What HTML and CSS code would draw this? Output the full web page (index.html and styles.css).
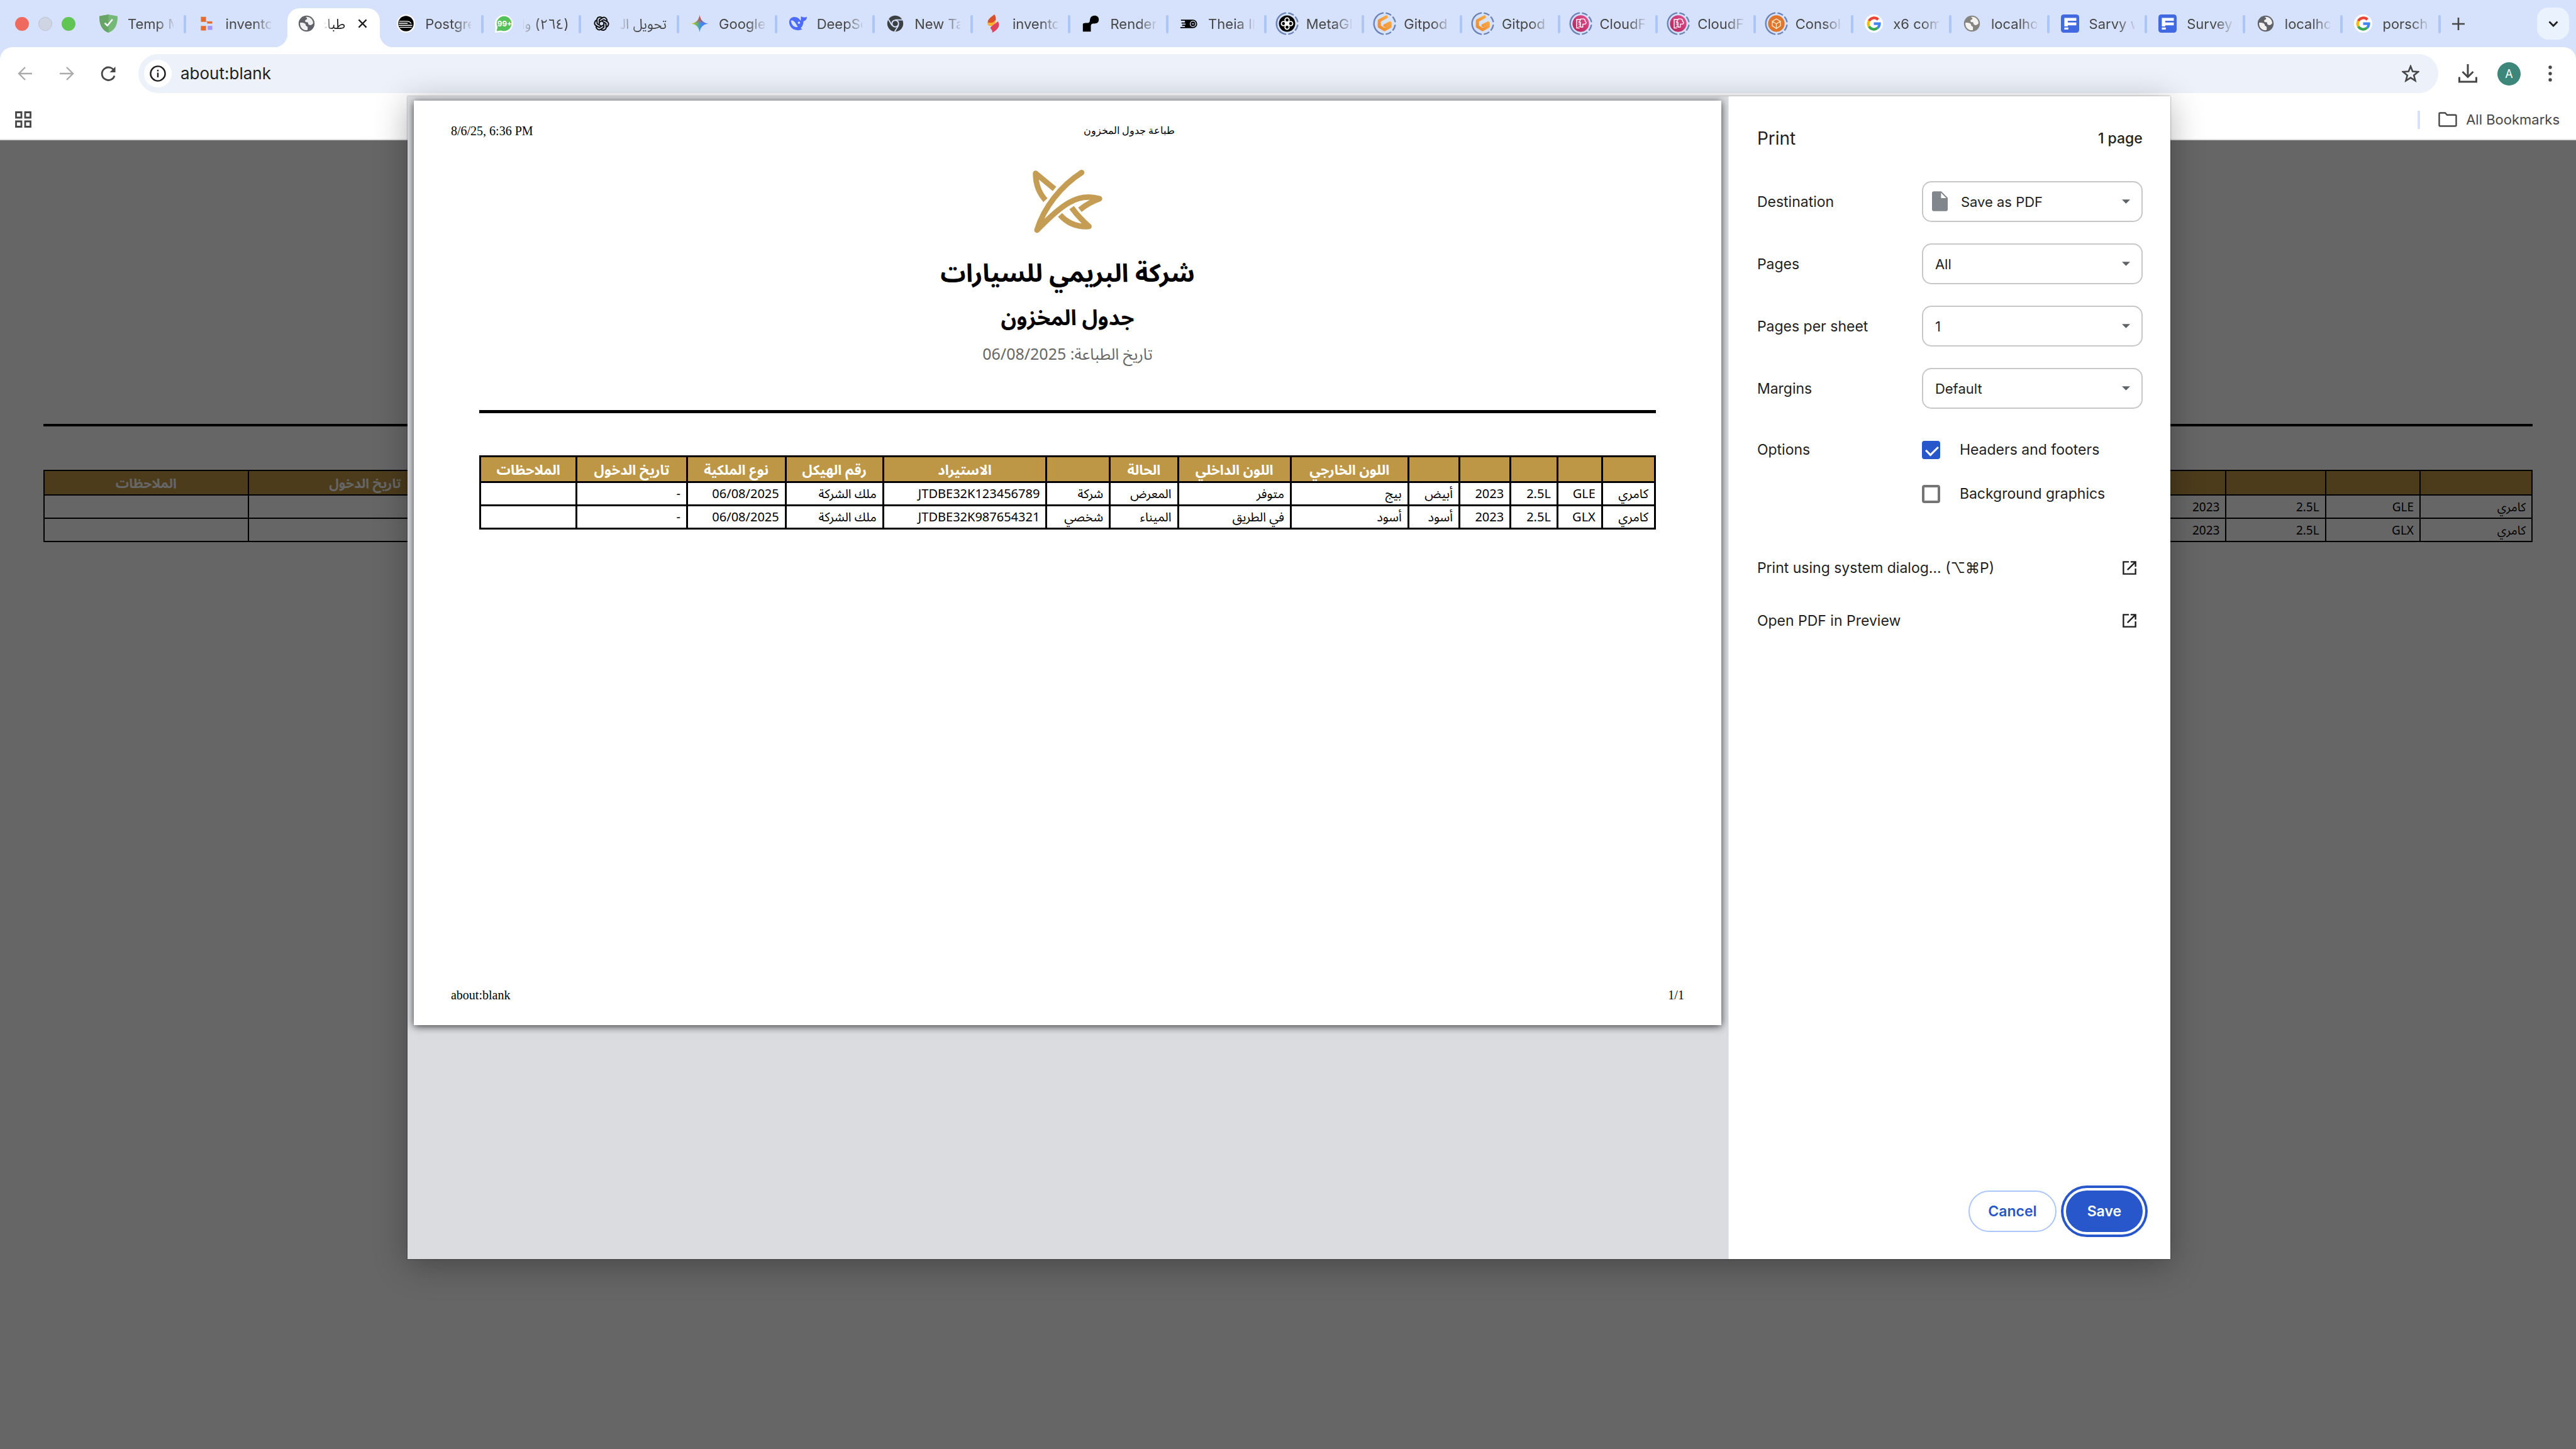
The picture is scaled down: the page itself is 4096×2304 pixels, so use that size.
FILE: index.html
```html
<!DOCTYPE html>
<html lang="en">
<head>
<meta charset="utf-8">
<title>about:blank</title>
<link rel="stylesheet" href="styles.css">
</head>
<body>
<svg class="symbols" aria-hidden="true">
  <symbol id="i-globe" viewBox="0 0 32 32"><circle cx="16" cy="16" r="14" fill="currentColor"/><path d="M4.500 14.500 C9 14 14.500 15 14.500 18.500 C14.500 21 18 20 18 23.500 L17.500 27.500 C10 28.500 4 23 4.500 14.500Z M14 4.500 C21 3 27.500 8.500 27.600 15.500 C25 19 22.500 19.500 20 18 C17.500 16.500 20 13.500 16.500 13.500 C12.500 13.500 12.500 9.500 15.500 9 C18 8.500 17 5.500 14 4.500Z" fill="#fff" fill-opacity=".9"/></symbol>
  <symbol id="i-shield" viewBox="0 0 32 32"><path d="M16 0 C21 1 26 2 32 3 C32 18 28 27 16 32 C4 27 0 18 0 3 C6 2 11 1 16 0Z" fill="#76b877"/><path d="M16 0 V32 C4 27 0 18 0 3 C6 2 11 1 16 0Z" fill="#66a567"/><path d="M9.500 15 L14 19.500 L23 8.500" fill="none" stroke="#fff" stroke-width="2.600"/></symbol>
  <symbol id="i-blocks" viewBox="0 0 32 32"><path d="M6 4 h9 v8 h11 v4 h-9 v-3 h-11Z M6 20 h9 v8 h-9Z" fill="#e56b2e"/><rect x="18" y="20" width="8" height="7" fill="#a594fb"/></symbol>
  <symbol id="i-train" viewBox="0 0 32 32"><circle cx="16" cy="16" r="16" fill="#fff"/><circle cx="16" cy="16" r="13.500" fill="#000"/><path d="M4 12 H17 Q23 12 25 16 M3.500 15.500 H19 M3.500 19 H27 M5 22.500 H26" stroke="#fff" stroke-width="1.600" fill="none"/></symbol>
  <symbol id="i-chat" viewBox="0 0 32 32"><path d="M0 32 L1 22 A16 15.500 0 1 1 11 31Z" fill="#fff"/><path d="M3 29 L4.500 22 A13 13 0 1 1 11 28Z" fill="#55c15a"/><text x="17" y="21" text-anchor="middle" class="badge-text">99+</text></symbol>
  <symbol id="i-gpt" viewBox="0 0 32 32"><g fill="none" stroke="#111" stroke-width="2.200"><path id="petal" d="M12 17.500 V9.500 L17 6 C22 3 27 8 25 13"/><use href="#petal" transform="rotate(60 16 16)"/><use href="#petal" transform="rotate(120 16 16)"/><use href="#petal" transform="rotate(180 16 16)"/><use href="#petal" transform="rotate(240 16 16)"/><use href="#petal" transform="rotate(300 16 16)"/></g></symbol>
  <symbol id="i-gemini" viewBox="0 0 32 32"><path d="M16 1 C17.500 10 22 14.500 31 16 C22 17.500 17.500 22 16 31 C14.500 22 10 17.500 1 16 C10 14.500 14.500 10 16 1Z" fill="url(#gem)"/><path d="M16 1 C17.500 10 22 14.500 31 16 H16Z" fill="url(#gem-top)"/><path d="M16 1 C14.500 10 10 14.500 1 16 H16Z" fill="url(#gem-top)"/></symbol>
  <symbol id="i-whale" viewBox="0 0 32 32"><path d="M1 12 C2 6 8 3 14 5 C17 6 19 8 21 11 C22 8 21 5 22 3 C24 5 27 6 32 4 C32 9 29 11 26 12 C26 17 24 21 21 24 L24 26 C14 31 0 25 1 12Z" fill="#4d6bfe"/><path d="M4 11 C8 9 12 14 16 22 C9 23 5 18 4 11Z" fill="#d5e2fb"/><circle cx="18" cy="14.500" r="2" fill="#d5e2fb"/></symbol>
  <symbol id="i-chrome" viewBox="0 0 32 32"><circle cx="16" cy="16" r="14" fill="#3c4043"/><circle cx="16" cy="16" r="5.800" fill="none" stroke="#d5e2fb" stroke-width="2.200"/><path d="M16 9.500 H29 M10.200 19 L4 8.500 M21.800 19 L15 30" stroke="#d5e2fb" stroke-width="2"/></symbol>
  <symbol id="i-flame" viewBox="0 0 32 32"><path d="M18 0 C9 6 4 11 7 17 C8 20 12 19 15 17 C21 13 22 6 18 0Z" fill="#d9512c"/><path d="M19 10 C22 15 18 18 13 20 C8 21 5 18 6 14 C12 15 17 15 19 10Z" fill="#fbb034"/><path d="M14 32 C24 27 29 19 24 12 C20 16 12 20 11 23 C10 26 15 26 14 32Z" fill="#e0435e"/></symbol>
  <symbol id="i-render" viewBox="0 0 32 32"><path d="M2 30 V17 C2 15 7 15 10 15 C16 15 13 9 16 5 C20 0 30 1 30 9 C30 15 25 16 21 16 C17 16 16 18 16 21 V30Z" fill="#000"/></symbol>
  <symbol id="i-theia" viewBox="0 0 32 32"><path d="M2 9 H23 A7.500 7.500 0 0 1 23 24 H1 V22 H9 V20 H4 V18 H10 V16 H3 V14 H9 V11 H2Z" fill="#000"/><circle cx="23" cy="16.500" r="4.800" fill="none" stroke="#d5e2fb" stroke-width="1.500"/><path d="M21 16.500 h4" stroke="#d5e2fb" stroke-width="1.500"/></symbol>
  <symbol id="i-ring" viewBox="0 0 40 40"><g fill="none" stroke="#6c83b5" stroke-width="2.600" stroke-linecap="round"><path d="M17.500 1.800 A18.400 18.400 0 0 0 17.500 38.200"/><path d="M23 2 A18.400 18.400 0 0 1 30.500 5 M34.500 9 A18.400 18.400 0 0 1 38.200 16.500 M38.200 23 A18.400 18.400 0 0 1 34.500 31 M30.500 35 A18.400 18.400 0 0 1 23 38"/></g></symbol>
  <symbol id="i-meta" viewBox="0 0 40 40"><use href="#i-ring"/><circle cx="20" cy="20" r="14" fill="#000"/><g fill="none" stroke="#fff" stroke-width="2"><circle cx="20" cy="13.800" r="3.600"/><circle cx="20" cy="26.200" r="3.600"/><circle cx="13.800" cy="20" r="3.600"/><circle cx="26.200" cy="20" r="3.600"/><path d="M17 17 L23 23 M17 23 L23 17"/></g></symbol>
  <symbol id="i-gitpod" viewBox="0 0 40 40"><use href="#i-ring"/><path d="M23 8.500 L11 15 V25 L20 30.500 L29.500 25 V19 L20.500 23.500" fill="none" stroke="url(#git)" stroke-width="5.400" stroke-linejoin="round" stroke-linecap="round"/></symbol>
  <symbol id="i-cloud" viewBox="0 0 40 40"><use href="#i-ring"/><circle cx="20" cy="20" r="14.200" fill="url(#pink)"/><g fill="none" stroke="#fff" stroke-width="1.500"><path d="M18 27.500 H13 V13 H20 M16 17 h2 M16 21 h4 M16 24.500 h3"/><path d="M20 12 h5 q3 1 2.500 4 q3.500 2 0 5 h-4 v5 h-4 v-8 h-2Z"/></g></symbol>
  <symbol id="i-console" viewBox="0 0 40 40"><use href="#i-ring"/><circle cx="20" cy="20" r="14.200" fill="#e0762b"/><path d="M20 12 L27 16 V24 L20 28.500 L13 24 V16Z M13 16 L20 20.500 L27 16 M20 20.500 V28" fill="none" stroke="#fbe3c8" stroke-width="1.500"/></symbol>
  <symbol id="i-google" viewBox="0 0 32 32"><circle cx="16" cy="16" r="16" fill="#fff"/><g fill="none" stroke-width="4.600"><path d="M23.500 9 A10 10 0 0 0 7.500 11.500" stroke="#ea4335"/><path d="M7.500 11.500 A10 10 0 0 0 7.500 21" stroke="#fbbc05"/><path d="M7.500 21 A10 10 0 0 0 22.800 23.500" stroke="#34a853"/><path d="M16 16.200 H26 A10 10 0 0 1 22.800 23.500" stroke="#4285f4"/></g></symbol>
  <symbol id="i-form" viewBox="0 0 32 32"><rect width="32" height="32" rx="5" fill="#4169e1"/><path d="M6 6 H27 V11 H12 V14 H27 V19 H12 V21 H6Z M6 23 h7 v3.500 h-7Z" fill="#fff"/></symbol>
  <symbol id="i-open" viewBox="0 0 24 24"><path d="M11 1.500 H1.500 V22.500 H22.500 V13 M14 1.500 H22.500 V10 M22 2 L8.500 15.500" fill="none" stroke="#1f1f1f" stroke-width="2.600"/></symbol>
  <symbol id="i-down" viewBox="0 0 14 7"><path d="M0 0 H14 L7 7Z" fill="#5f6368"/></symbol>
  <defs>
    <linearGradient id="gem" x1="0" y1=".5" x2="1" y2=".5"><stop offset="0" stop-color="#f9c20a"/><stop offset=".35" stop-color="#5bb974"/><stop offset=".6" stop-color="#4285f4"/><stop offset="1" stop-color="#4285f4"/></linearGradient>
    <linearGradient id="gem-top" x1="0" y1="0" x2="0" y2="1"><stop offset="0" stop-color="#ea4335"/><stop offset=".45" stop-color="#ea4335" stop-opacity=".8"/><stop offset="1" stop-color="#ea4335" stop-opacity="0"/></linearGradient>
    <linearGradient id="git" x1="1" y1="0" x2="0" y2="1"><stop offset="0" stop-color="#f9ae4a"/><stop offset="1" stop-color="#f08a2c"/></linearGradient>
    <linearGradient id="pink" x1="0" y1="1" x2="1" y2="0"><stop offset="0" stop-color="#b0235c"/><stop offset="1" stop-color="#e3528e"/></linearGradient>
  </defs>
</svg>

<header class="browser">
  <div class="tab-strip">
    <div class="lights"><span class="light red"></span><span class="light idle"></span><span class="light green"></span></div>
    <nav class="tabs" aria-label="Open tabs">
      <button class="tab"><svg class="fav"><use href="#i-shield"/></svg><span class="tab-title">Temp Mail</span></button>
      <button class="tab quiet"><svg class="fav"><use href="#i-blocks"/></svg><span class="tab-title">inventory</span></button>
      <button class="tab active"><svg class="fav grey"><use href="#i-globe"/></svg><span class="tab-title rtl" dir="rtl">طباعة</span><svg class="close" viewBox="0 0 16 16"><path d="M1.500 1.500 L14.500 14.500 M14.500 1.500 L1.500 14.500" stroke="#1f1f1f" stroke-width="2.400"/></svg></button>
      <button class="tab"><svg class="fav"><use href="#i-train"/></svg><span class="tab-title">Postgres</span></button>
      <button class="tab"><svg class="fav"><use href="#i-chat"/></svg><span class="tab-title rtl" dir="rtl">(٢٦٤) واتساب</span></button>
      <button class="tab"><svg class="fav"><use href="#i-gpt"/></svg><span class="tab-title rtl" dir="rtl">تحويل الملف</span></button>
      <button class="tab"><svg class="fav"><use href="#i-gemini"/></svg><span class="tab-title">Google G</span></button>
      <button class="tab"><svg class="fav"><use href="#i-whale"/></svg><span class="tab-title">DeepSeek</span></button>
      <button class="tab"><svg class="fav"><use href="#i-chrome"/></svg><span class="tab-title">New Tab</span></button>
      <button class="tab"><svg class="fav"><use href="#i-flame"/></svg><span class="tab-title">inventory</span></button>
      <button class="tab"><svg class="fav"><use href="#i-render"/></svg><span class="tab-title">Render</span></button>
      <button class="tab"><svg class="fav"><use href="#i-theia"/></svg><span class="tab-title">Theia IDE</span></button>
      <button class="tab"><svg class="fav ring"><use href="#i-meta"/></svg><span class="tab-title">MetaGPT</span></button>
      <button class="tab"><svg class="fav ring"><use href="#i-gitpod"/></svg><span class="tab-title">Gitpod</span></button>
      <button class="tab"><svg class="fav ring"><use href="#i-gitpod"/></svg><span class="tab-title">Gitpod</span></button>
      <button class="tab"><svg class="fav ring"><use href="#i-cloud"/></svg><span class="tab-title">CloudFo</span></button>
      <button class="tab"><svg class="fav ring"><use href="#i-cloud"/></svg><span class="tab-title">CloudFo</span></button>
      <button class="tab"><svg class="fav ring"><use href="#i-console"/></svg><span class="tab-title">Console</span></button>
      <button class="tab"><svg class="fav"><use href="#i-google"/></svg><span class="tab-title">x6 com</span></button>
      <button class="tab"><svg class="fav warm"><use href="#i-globe"/></svg><span class="tab-title">localhost</span></button>
      <button class="tab"><svg class="fav"><use href="#i-form"/></svg><span class="tab-title">Sarvy w</span></button>
      <button class="tab"><svg class="fav"><use href="#i-form"/></svg><span class="tab-title">Survey</span></button>
      <button class="tab"><svg class="fav grey"><use href="#i-globe"/></svg><span class="tab-title">localhost</span></button>
      <button class="tab"><svg class="fav"><use href="#i-google"/></svg><span class="tab-title">porsche</span></button>
    </nav>
    <button class="new-tab" aria-label="New tab"><svg viewBox="0 0 20 20"><path d="M10 0 V20 M0 10 H20" stroke="#474747" stroke-width="2.600"/></svg></button>
    <button class="tab-search" aria-label="Search tabs"><svg viewBox="0 0 16 10"><path d="M1.500 1.500 L8 8 L14.500 1.500" fill="none" stroke="#1f1f1f" stroke-width="2.800"/></svg></button>
  </div>
  <div class="chrome">
    <div class="toolbar">
      <div class="nav-buttons">
        <button aria-label="Back"><svg viewBox="0 0 24 24"><path d="M23 12 H2 M12 2 L2 12 L12 22" fill="none" stroke="#aaa" stroke-width="2.400"/></svg></button>
        <button aria-label="Forward"><svg viewBox="0 0 24 24"><path d="M1 12 H22 M12 2 L22 12 L12 22" fill="none" stroke="#aaa" stroke-width="2.400"/></svg></button>
        <button aria-label="Reload"><svg viewBox="0 0 24 24"><path d="M22 9 A10.200 10.200 0 1 0 22 15.500" fill="none" stroke="#474747" stroke-width="2.800"/><path d="M23.500 1 V10 H14.500 Z" fill="#474747"/></svg></button>
      </div>
      <div class="omnibox">
        <button class="site-info" aria-label="Site information"><svg viewBox="0 0 26 26"><circle cx="13" cy="13" r="11.600" fill="none" stroke="#1f1f1f" stroke-width="2.400"/><path d="M13 11.500 V19 M13 7 V9.500" stroke="#1f1f1f" stroke-width="2.400"/></svg></button>
        <input class="address" type="text" value="about:blank" aria-label="Address">
        <button class="star" aria-label="Bookmark this tab"><svg viewBox="0 0 28 28"><path d="M14 2.500 L17.200 10.600 L26 11.200 L19.200 16.800 L21.500 25.300 L14 20.600 L6.500 25.300 L8.800 16.800 L2 11.200 L10.800 10.600Z" fill="none" stroke="#474747" stroke-width="2.600"/></svg></button>
      </div>
      <div class="actions">
        <button class="download" aria-label="Downloads"><svg viewBox="0 0 30 30"><path d="M15 0 V20 M6.500 12 L15 20.500 L23.500 12 M1.500 20.500 V28 H28.500 V20.500" fill="none" stroke="#474747" stroke-width="3"/></svg></button>
        <button class="avatar" aria-label="Profile">A</button>
        <button class="menu" aria-label="Menu"><svg viewBox="0 0 6 26"><g fill="#474747"><circle cx="3" cy="3" r="2.700"/><circle cx="3" cy="13" r="2.700"/><circle cx="3" cy="23" r="2.700"/></g></svg></button>
      </div>
    </div>
    <div class="bookmarks">
      <button class="apps" aria-label="Apps"><svg viewBox="0 0 26 26"><path d="M1.500 1.500 h8.500 v8.500 h-8.500Z M16 1.500 h8.500 v8.500 h-8.500Z M1.500 16 h8.500 v8.500 h-8.500Z M16 16 h8.500 v8.500 h-8.500Z" fill="none" stroke="#474747" stroke-width="2.800"/></svg></button>
      <button class="all-bookmarks"><svg viewBox="0 0 30 24"><path d="M1.500 3 Q1.500 1.500 3 1.500 H11 L14 4.800 H27 Q28.500 4.800 28.500 6.300 V21 Q28.500 22.500 27 22.500 H3 Q1.500 22.500 1.500 21Z" fill="none" stroke="#474747" stroke-width="2.400"/></svg>All Bookmarks</button>
    </div>
  </div>
</header>

<main class="document">
  <hr class="rule">
  <table class="stock" dir="rtl">
    <colgroup><col><col><col><col><col><col><col><col><col><col><col><col><col><col></colgroup>
    <thead><tr><th></th><th></th><th></th><th></th><th></th><th></th><th></th><th></th><th></th><th></th><th></th><th></th><th>تاريخ الدخول</th><th>الملاحظات</th></tr></thead>
    <tbody>
      <tr><td>كامري</td><td>GLE</td><td>2.5L</td><td>2023</td><td></td><td></td><td></td><td></td><td></td><td></td><td></td><td></td><td></td><td></td></tr>
      <tr><td>كامري</td><td>GLX</td><td>2.5L</td><td>2023</td><td></td><td></td><td></td><td></td><td></td><td></td><td></td><td></td><td></td><td></td></tr>
    </tbody>
  </table>
  <div class="backdrop"></div>
</main>

<section class="print-dialog" role="dialog" aria-label="Print">
  <div class="preview">
    <article class="sheet">
      <div class="sheet-head"><span>8/6/25, 6:36 PM</span><span class="sheet-title" dir="rtl">طباعة جدول المخزون</span></div>
      <div class="sheet-body">
        <svg class="logo" viewBox="70 70 376 340"><g fill="none" stroke="#c59c53" stroke-width="29" stroke-linejoin="round"><path d="M143 234 C108 195 92 150 92 95 L190 176"/><path d="M331 91 C225 158 135 272 99 390 C225 260 310 192 424 227 C385 240 355 258 322 284"/><path d="M219 311 C255 352 300 375 369 371 C340 345 310 315 279 273"/></g><circle cx="331" cy="91" r="14.500" fill="#c59c53"/></svg>
        <h1 dir="rtl">شركة البريمي للسيارات</h1>
        <h2 dir="rtl">جدول المخزون</h2>
        <p class="printed" dir="rtl">تاريخ الطباعة: 06/08/2025</p>
        <hr class="rule">
        <table class="stock" dir="rtl">
          <colgroup><col><col><col><col><col><col><col><col><col><col><col><col><col><col></colgroup>
          <thead><tr><th></th><th></th><th></th><th></th><th></th><th>اللون الخارجي</th><th>اللون الداخلي</th><th>الحالة</th><th></th><th>الاستيراد</th><th>رقم الهيكل</th><th>نوع الملكية</th><th>تاريخ الدخول</th><th>الملاحظات</th></tr></thead>
          <tbody>
            <tr><td>كامري</td><td>GLE</td><td>2.5L</td><td>2023</td><td>أبيض</td><td>بيج</td><td>متوفر</td><td>المعرض</td><td>شركة</td><td>JTDBE32K123456789</td><td>ملك الشركة</td><td>06/08/2025</td><td>-</td><td></td></tr>
            <tr><td>كامري</td><td>GLX</td><td>2.5L</td><td>2023</td><td>أسود</td><td>أسود</td><td>في الطريق</td><td>الميناء</td><td>شخصي</td><td>JTDBE32K987654321</td><td>ملك الشركة</td><td>06/08/2025</td><td>-</td><td></td></tr>
          </tbody>
        </table>
      </div>
      <div class="sheet-foot"><span>about:blank</span><span>1/1</span></div>
    </article>
  </div>
  <form class="settings">
    <div class="settings-head"><h2>Print</h2><span>1 page</span></div>
    <div class="row"><label for="destination">Destination</label><div class="select with-icon"><svg class="file" viewBox="0 0 27 34"><path d="M3 0 H16 L27 11 V31 Q27 34 24 34 H3 Q0 34 0 31 V3 Q0 0 3 0Z" fill="#80868b"/><path d="M15.500 2.500 V11.500 H24.500Z" fill="#fff"/></svg><select id="destination"><option>Save as PDF</option></select><svg class="arrow"><use href="#i-down"/></svg></div></div>
    <div class="row"><label for="pages">Pages</label><div class="select"><select id="pages"><option>All</option></select><svg class="arrow"><use href="#i-down"/></svg></div></div>
    <div class="row"><label for="per-sheet">Pages per sheet</label><div class="select"><select id="per-sheet"><option>1</option></select><svg class="arrow"><use href="#i-down"/></svg></div></div>
    <div class="row"><label for="margins">Margins</label><div class="select"><select id="margins"><option>Default</option></select><svg class="arrow"><use href="#i-down"/></svg></div></div>
    <div class="options">
      <span>Options</span>
      <div class="checks">
        <label class="check"><input type="checkbox" checked>Headers and footers</label>
        <label class="check"><input type="checkbox">Background graphics</label>
      </div>
    </div>
    <div class="links">
      <button type="button" class="link-row"><span>Print using system dialog… (⌥⌘P)</span><svg><use href="#i-open"/></svg></button>
      <button type="button" class="link-row"><span>Open PDF in Preview</span><svg><use href="#i-open"/></svg></button>
    </div>
    <div class="buttons"><button type="button" class="cancel">Cancel</button><button type="button" class="save">Save</button></div>
  </form>
</section>
</body>
</html>
```
FILE: styles.css
```css
* { box-sizing: border-box; }
html, body { height: 100%; }
body {
  margin: 0;
  display: flex;
  flex-direction: column;
  position: relative;
  overflow: hidden;
  background: #fff;
  color: #1f1f1f;
  font-family: Inter, "Liberation Sans", "Noto Sans Arabic", sans-serif;
}
button { margin: 0; padding: 0; border: 0; background: none; font: inherit; color: inherit; }
button svg { display: block; }
.symbols { position: absolute; width: 0; height: 0; }
.badge-text { font-size: 13px; font-weight: 700; fill: #fff; }

/* Tab strip */
.browser { background: #d6e2fb; }
.tab-strip { display: flex; align-items: center; height: 75px; padding: 0 11px 0 24px; }
.lights { display: flex; gap: 15px; width: 114px; }
.light { width: 22px; height: 22px; border-radius: 50%; }
.red { background: #ee6a5f; }
.idle { background: #cfd5e2; border: 1px solid #bcc2cf; }
.green { background: #61c554; }
.tabs { display: flex; flex: 1; min-width: 0; height: 75px; }
.tab {
  position: relative;
  display: flex;
  flex: 1 1 0;
  align-items: center;
  gap: 16px;
  min-width: 0;
  padding: 0 18px 0 20px;
  font-size: 22px;
  color: #474747;
  text-align: left;
}
.tab::after {
  content: "";
  position: absolute;
  right: -2px;
  top: 24px;
  width: 4px;
  height: 29px;
  border-radius: 2px;
  background: #adc6f8;
}
.tab.quiet::after { display: none; }
.fav { flex: none; width: 29px; height: 29px; }
.fav.ring { width: 37px; height: 37px; margin: 0 -4px; }
.grey { color: #5f6368; }
.warm { color: #85847f; }
.tab-title {
  flex: 1;
  min-width: 0;
  overflow: hidden;
  white-space: nowrap;
  line-height: 36px;
  mask-image: linear-gradient(to right, #000 62%, transparent 105%);
}
.tab-title.rtl { text-align: right; mask-image: linear-gradient(to left, #000 62%, transparent 105%); }
.tab.active { flex: 0 0 162px; padding: 0 27px 0 24px; gap: 14px; color: #1f1f1f; z-index: 0; }
.close { flex: none; width: 15px; height: 15px; margin-left: 6px; }
.tab.active::before {
  content: "";
  position: absolute;
  z-index: -1;
  inset: 13px 7px 0 8px;
  border-radius: 20px 20px 0 0;
  background: #fff;
}
.tab.active::after {
  z-index: -1;
  inset: auto -15px 0 -14px;
  width: auto;
  height: 22px;
  border-radius: 0;
  background:
    radial-gradient(circle at 0 0, transparent 22px, #fff 23px) left / 22px 22px no-repeat,
    radial-gradient(circle at 100% 0, transparent 22px, #fff 23px) right / 22px 22px no-repeat;
}
.new-tab { width: 60px; padding: 0 20px; margin-right: 95px; }
.new-tab svg { width: 20px; height: 20px; }
.tab-search {
  display: grid;
  place-items: center;
  width: 51px;
  height: 51px;
  border-radius: 18px;
  background: #eaf2fd;
}
.tab-search svg { width: 16px; height: 10px; }

/* Toolbar and bookmarks bar */
.chrome { background: #fff; border-radius: 20px 20px 0 0; border-bottom: 2px solid #dfe1e0; }
.toolbar { display: flex; align-items: center; height: 84px; padding: 0 30px 0 28px; }
.nav-buttons { display: flex; gap: 42px; width: 192px; }
.nav-buttons svg { width: 24px; height: 24px; }
.omnibox {
  display: flex;
  flex: 1;
  align-items: center;
  height: 62px;
  padding: 0 30px 0 9px;
  border-radius: 31px;
  background: #edf2fa;
}
.site-info { display: grid; place-items: center; width: 44px; height: 44px; border-radius: 50%; background: #fff; }
.site-info svg { width: 26px; height: 26px; }
.address {
  flex: 1;
  margin: 0 0 0 14px;
  padding: 0;
  border: 0;
  background: none;
  color: #1f1f1f;
  font: 26px/36px Inter, "Liberation Sans", sans-serif;
}
.star svg { width: 28px; height: 28px; }
.actions { display: flex; align-items: center; width: 189px; padding-left: 32px; }
.download svg { width: 30px; height: 30px; }
.avatar { width: 37px; height: 37px; margin: 0 44px 0 32px; border-radius: 50%; background: #3c8779; color: #fff; font-size: 18px; line-height: 37px; }
.menu svg { width: 6px; height: 26px; }
.bookmarks { display: flex; align-items: center; justify-content: space-between; height: 62px; padding: 0 26px 0 24px; }
.apps svg { width: 26px; height: 26px; }
.all-bookmarks {
  display: flex;
  align-items: center;
  gap: 14px;
  height: 29px;
  padding-left: 29px;
  border-left: 4px solid #d6e2fb;
  font-size: 22px;
  color: #474747;
}
.all-bookmarks svg { width: 30px; height: 24px; }

/* Page behind the dialog */
.document { position: relative; flex: 1; padding: 451px 69px 0; }
.backdrop { position: absolute; inset: 0; background: rgba(0, 0, 0, .6); }
.rule { height: 4px; margin: 0 0 69px; border: 0; background: #000; }
.stock {
  width: 100%;
  table-layout: fixed;
  border-collapse: collapse;
  color: #000;
  font: 19px/24px "Noto Sans", "Noto Sans Arabic", sans-serif;
}
.stock th, .stock td { height: 37px; padding: 0 9px; border: 2px solid #000; white-space: nowrap; }
.stock th { height: 39px; background: #bd9746; color: #fff; font-size: 21px; text-align: center; }
.stock td { text-align: right; }
.stock col:nth-child(1) { width: 4.5%; }
.stock col:nth-child(2) { width: 3.8%; }
.stock col:nth-child(3) { width: 4%; }
.stock col:nth-child(4), .stock col:nth-child(5) { width: 4.35%; }
.stock col:nth-child(6) { width: 10%; }
.stock col:nth-child(7) { width: 9.6%; }
.stock col:nth-child(8) { width: 5.8%; }
.stock col:nth-child(9) { width: 5.4%; }
.stock col:nth-child(10) { width: 13.9%; }
.stock col:nth-child(11) { width: 8.3%; }
.stock col:nth-child(12) { width: 8.4%; }
.stock col:nth-child(13) { width: 9.4%; }
.stock col:nth-child(14) { width: 8.2%; }

/* Print dialog */
.print-dialog {
  position: absolute;
  inset: 153px 15.75% 302px 15.82%;
  display: flex;
  background: #fff;
  box-shadow: 0 0 2px rgba(0, 0, 0, .5), 0 10px 50px rgba(0, 0, 0, .3);
}
.preview { flex: 1; min-width: 0; padding: 7px 11px 0 10px; overflow: hidden; background: #dadce0; }
.sheet {
  display: flex;
  flex-direction: column;
  aspect-ratio: 2079 / 1470;
  padding: 36px 59px;
  background: #fff;
  color: #000;
  box-shadow: 0 2px 12px rgba(0, 0, 0, .75);
}
.sheet-head, .sheet-foot { display: flex; justify-content: space-between; font: 20px/24px "Liberation Serif", serif; }
.sheet-title { padding-right: 810px; font-size: 16px; }
.sheet-body { flex: 1; display: flex; flex-direction: column; align-items: center; padding: 48px 45px 0; font-family: "Noto Sans", "Noto Sans Arabic", sans-serif; }
.sheet-body h1 { margin: 31px 0 0; font-size: 40px; line-height: 60px; }
.sheet-body h2 { margin: 16px 0 0; font-size: 34px; line-height: 50px; }
.printed { margin: 16px 0 0; font-size: 25px; line-height: 34px; color: #666; }
.logo { width: 115px; height: 104px; }
.sheet .rule { width: 100%; height: 5px; margin: 73px 0 67px; }
.sheet .stock { font-size: 20px; }
.sheet .stock th, .sheet .stock td { border-width: 3px; }
.sheet .stock th { height: 41px; font-size: 22px; }

.settings {
  display: flex;
  flex-direction: column;
  width: 703px;
  padding: 46px 44px 43px 45px;
  border-left: 1px solid #e8eaed;
  font-size: 23px;
  line-height: 32px;
}
.settings-head { display: flex; justify-content: space-between; align-items: center; height: 42px; margin-bottom: 47px; font-weight: 500; }
.settings-head h2 { margin: 0; font-size: 28px; font-weight: 400; }
.row { display: flex; justify-content: space-between; align-items: center; height: 65px; margin-bottom: 34px; }
.select { position: relative; width: 351px; height: 65px; }
.select select {
  width: 100%;
  height: 100%;
  padding: 0 50px 0 19px;
  border: 2px solid #c7c7c7;
  border-radius: 15px;
  appearance: none;
  background: #fff;
  color: #1f1f1f;
  font: 22px/32px Inter, "Liberation Sans", sans-serif;
}
.with-icon select { padding-left: 60px; }
.file { position: absolute; left: 16px; top: 16px; width: 25px; height: 32px; }
.arrow { position: absolute; right: 20px; top: 29px; width: 13px; height: 7px; }
.options { display: flex; justify-content: space-between; margin-top: 15px; }
.checks { width: 351px; display: flex; flex-direction: column; gap: 38px; }
.check { display: flex; align-items: center; gap: 31px; }
.check input {
  position: relative;
  width: 29px;
  height: 29px;
  margin: 0;
  appearance: none;
  border: 4px solid #757575;
  border-radius: 4px;
}
.check input:checked { border-color: #2757ca; background: #2757ca; }
.check input:checked::after {
  content: "";
  position: absolute;
  left: 6px;
  top: 0;
  width: 9px;
  height: 16px;
  border: solid #fff;
  border-width: 0 3px 3px 0;
  transform: rotate(45deg);
}
.links { display: flex; flex-direction: column; gap: 52px; margin-top: 86px; }
.link-row { display: flex; justify-content: space-between; align-items: center; padding-right: 10px; }
.link-row svg { width: 22px; height: 22px; }
.buttons { display: flex; justify-content: flex-end; gap: 15px; margin-top: auto; }
.buttons button { height: 66px; border-radius: 33px; font-weight: 600; }
.cancel { width: 140px; border: 2px solid #adc6f8; color: #2757ca; }
.save { width: 122px; background: #2757ca; color: #fff; box-shadow: 0 0 0 4px #fff, 0 0 0 8px #2757ca; }
```
